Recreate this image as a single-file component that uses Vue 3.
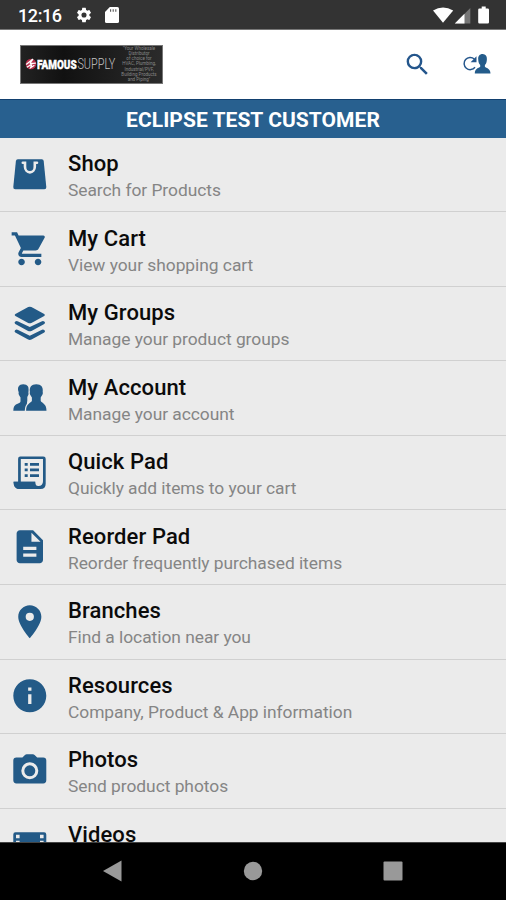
<script setup>
const rows = [
  { icon: 'shop', title: 'Shop', text: 'Search for Products' },
  { icon: 'cart', title: 'My Cart', text: 'View your shopping cart' },
  { icon: 'groups', title: 'My Groups', text: 'Manage your product groups' },
  { icon: 'account', title: 'My Account', text: 'Manage your account' },
  { icon: 'quick', title: 'Quick Pad', text: 'Quickly add items to your cart' },
  { icon: 'reorder', title: 'Reorder Pad', text: 'Reorder frequently purchased items' },
  { icon: 'pin', title: 'Branches', text: 'Find a location near you' },
  { icon: 'info', title: 'Resources', text: 'Company, Product & App information' },
  { icon: 'camera', title: 'Photos', text: 'Send product photos' },
  { icon: 'movie', title: 'Videos', text: '' },
]
const filled = {
  cart: 'M7 18c-1.1 0-1.99.9-1.99 2S5.9 22 7 22s2-.9 2-2-.9-2-2-2zM1 2v2h2l3.6 7.59-1.35 2.45c-.16.28-.25.61-.25.96 0 1.1.9 2 2 2h12v-2H7.42c-.14 0-.25-.11-.25-.25l.03-.12.9-1.63h7.45c.75 0 1.41-.41 1.75-1.03l3.58-6.49A1 1 0 0 0 20.25 4H5.21l-.94-2H1zm16 16c-1.1 0-1.99.9-1.99 2s.89 2 1.99 2 2-.9 2-2-.9-2-2-2z',
  reorder: 'M14 2H6c-1.1 0-1.99.9-1.99 2L4 20c0 1.1.89 2 1.99 2H18c1.1 0 2-.9 2-2V8l-6-6zm2 16H8v-2h8v2zm0-4H8v-2h8v2zm-3-5V3.5L18.5 9H13z',
  pin: 'M12 2C8.13 2 5 5.13 5 9c0 5.25 7 13 7 13s7-7.75 7-13c0-3.87-3.13-7-7-7zm0 9.5a2.5 2.5 0 0 1 0-5 2.5 2.5 0 0 1 0 5z',
  info: 'M12 2C6.48 2 2 6.48 2 12s4.48 10 10 10 10-4.48 10-10S17.52 2 12 2zm1 15h-2v-6h2v6zm0-8h-2V7h2v2z',
}
</script>

<template>
  <div class="screen">
    <header class="status">
      <span class="time">12:16</span>
      <svg class="gear" viewBox="0 0 24 24"><path fill="#fff" d="M19.14 12.94c.04-.3.06-.61.06-.94 0-.32-.02-.64-.07-.94l2.03-1.58a.49.49 0 0 0 .12-.61l-1.92-3.32a.49.49 0 0 0-.59-.22l-2.39.96c-.5-.38-1.03-.7-1.62-.94l-.36-2.54a.48.48 0 0 0-.48-.41h-3.84c-.24 0-.43.17-.47.41l-.36 2.54c-.59.24-1.13.57-1.62.94l-2.39-.96a.48.48 0 0 0-.59.22L2.74 8.87c-.12.21-.08.47.12.61l2.03 1.58c-.05.3-.09.63-.09.94s.02.64.07.94l-2.03 1.58a.49.49 0 0 0-.12.61l1.92 3.32c.12.22.37.29.59.22l2.39-.96c.5.38 1.03.7 1.62.94l.36 2.54c.05.24.24.41.48.41h3.84c.24 0 .44-.17.47-.41l.36-2.54c.59-.24 1.13-.56 1.62-.94l2.39.96c.22.08.47 0 .59-.22l1.92-3.32a.49.49 0 0 0-.12-.61l-2.01-1.58zM12 15.4a3.4 3.4 0 1 1 0-6.8 3.4 3.4 0 0 1 0 6.8z"/></svg>
      <svg class="sd" viewBox="0 0 14 16"><path fill="#fff" d="M4.8 0H12.4Q14 0 14 1.6V14.4Q14 16 12.4 16H1.6Q0 16 0 14.4V5z"/><path stroke="#555" stroke-width="1.1" d="M5.6 2.2v2.6M8.2 2.2v2.6M10.8 2.2v2.6"/></svg>
      <svg class="signals" viewBox="0 0 60 20">
        <path fill="#fff" d="M1 5.5Q11 -.5 21.200 5.500L11 17.700z"/>
        <path fill="#777" d="M38.300 3V18.500H22.800z"/><path fill="#fff" d="M32.500 8.800V18.500H22.800z"/>
        <path fill="#fff" d="M49.700 1.500h4v2h2q1.300 0 1.300 1.300v12.400q0 1.300-1.300 1.300h-8.300q-1.200 0-1.200-1.300V4.800q0-1.300 1.200-1.300h2.300z"/>
      </svg>
    </header>

    <div class="toolbar">
      <div class="logo">
        <svg class="mark" viewBox="0 0 12 12"><circle cx="6" cy="6" r="5.3" fill="#b62c49"/><path d="M1.2 6.6 6.5 2.2 5.4 5.6 10.8 5.2M1.8 9.2 6.8 6.2 5.6 9.8 9.4 7.3M8 1 6.4 3.4" fill="none" stroke="#fff" stroke-width="1.3"/></svg>
        <svg class="brand" viewBox="0 0 80 18"><text class="famous" x="0" y="14" textLength="39.600" lengthAdjust="spacingAndGlyphs">FAMOUS</text><text class="supply" x="40.400" y="14" textLength="38" lengthAdjust="spacingAndGlyphs">SUPPLY</text></svg>
        <div class="motto">"Your Wholesale<br>Distributor<br>of choice for<br>HVAC, Plumbing,<br>Industrial/PVF,<br>Building Products<br>and Piping"</div>
      </div>
      <svg class="search" viewBox="0 0 24 24"><path fill="#24568c" d="M15.5 14h-.79l-.28-.27A6.47 6.47 0 0 0 16 9.5 6.5 6.5 0 1 0 9.5 16c1.61 0 3.09-.59 4.23-1.57l.27.28v.79l5 4.99L20.49 19l-4.99-5zm-6 0C7.01 14 5 11.99 5 9.5S7.01 5 9.5 5 14 7.01 14 9.5 11.99 14 9.5 14z"/></svg>
      <svg class="switch" viewBox="0 0 30 22">
        <path d="M12.300 6A6.100 6.100 0 1 0 13 14.300" fill="none" stroke="#24568c" stroke-width="1.5"/><path d="M14.500 3.200v6H8.600z" fill="#24568c"/>
        <path fill="#245c8b" d="M20.700 1C17.600 1 16 3.200 16.200 6q.1 4.500 2 6v1.800c-1.500 1.300-5.400 1.700-5.400 6.600h15.700c0-4.900-4.400-5.300-5.600-6.600V12q1.900-1.500 2-6c.1-2.800-1.300-5-4.200-5z"/>
      </svg>
    </div>

    <div class="customer"><span>ECLIPSE TEST CUSTOMER</span></div>

    <main class="list">
      <div v-for="row in rows" :key="row.icon" class="row">
        <svg v-if="filled[row.icon]" class="icon" viewBox="0 0 24 24"><path :d="filled[row.icon]"/></svg>
        <svg v-else class="icon" viewBox="0 0 39.6 39.6">
          <template v-if="row.icon === 'shop'">
            <path d="M7.800 4.300h24q1.700 0 1.900 1.700l2.600 26q.2 2.200-2 2.200H5.300q-2.200 0-2-2.200l2.600-26q.2-1.700 1.900-1.700z"/>
            <path class="cut" stroke-width="2.600" stroke-linecap="round" d="M12.800 7.800h2.200v4a4.900 5.600 0 0 0 9.800 0v-4H27"/>
          </template>
          <template v-else-if="row.icon === 'groups'">
            <path d="M18.200 3.100q1.600-.8 3.200 0l12.800 6.900q1.500 1 0 2l-12.800 6.900q-1.600.8-3.200 0L5.400 12q-1.500-1 0-2z"/>
            <path d="M5.300 17.400q1.400-.8 2.800 0l11.700 5.700 11.700-5.700q1.400-.8 2.800 0 1.600 1.300 0 2.600l-12.800 6.900q-1.700.9-3.400 0L5.300 20q-1.600-1.300 0-2.600z"/>
            <path d="M5.300 26q1.400-.8 2.800 0l11.700 5.700L31.500 26q1.400-.8 2.800 0 1.600 1.300 0 2.600l-12.800 6.900q-1.700.9-3.400 0L5.300 28.600q-1.600-1.300 0-2.600z"/>
          </template>
          <template v-else-if="row.icon === 'account'">
            <path d="M13.200 6.300c4.500 0 6.100 3 5.600 7.500.7 2.100-.8 3.600-1.500 5.300v3.500L16 32.800H3.300q-.2-5.700 4.800-7.200c1.800-.7 2.400-1.200 2.400-2.600v-3.400c-.9-1.700-2.500-3.200-1.800-5.300C6.800 9.300 9 6.300 13.200 6.300z"/>
            <path class="person" d="M26.300 6.300c5 0 7.100 3 6.400 7.500.8 2.200-.9 4-2 5.600v3.400c1 2.700 5.800 2.300 5.800 10H16.100c0-7.700 4.800-7.300 5.800-10v-3.400c-1.100-1.600-2.800-3.400-2-5.600-.7-4.500 1.400-7.500 6.400-7.500z"/>
          </template>
          <template v-else-if="row.icon === 'quick'">
            <path fill-rule="evenodd" d="M10.300 3.400h23q2.400 0 2.400 2.400v25q0 5.300-5.200 5.300H9.600Q3.600 36.100 3.600 29.600v-.9h4.500V5.800q0-2.400 2.200-2.400zM10.800 6v22.700h14.400v1q0 3.300 3.100 3.300 4.700 0 4.700-4.800V6z"/>
            <path d="M3.600 28.700H25.200v1q0 3.300 3.300 4.300L26 36.100H9.600Q3.600 36.100 3.600 28.700z"/>
            <path d="M14.700 10h3v2.700h-3zM20 10h9v2.700h-9zM14.700 15.600h3v2.700h-3zM20 15.600h9v2.700h-9zM14.700 21.200h3v2.700h-3zM20 21.200h9v2.700h-9z"/>
          </template>
          <template v-else-if="row.icon === 'camera'">
            <path d="M6.400 6.400h6L15 3.900q.7-.7 1.700-.7h6.200q1 0 1.700.7l2.600 2.500h6q3.100 0 3.100 3.100v19.800q0 3.100-3.100 3.100H6.400q-3.100 0-3.100-3.100V9.500q0-3.100 3.100-3.100z"/>
            <circle class="cut" cx="19.800" cy="19.800" r="7" stroke-width="3"/>
          </template>
          <template v-else>
            <path fill-rule="evenodd" d="M5.500 6.300h28.600q2.200 0 2.200 2.200v22.600q0 2.200-2.200 2.200H5.500q-2.200 0-2.200-2.200V8.500q0-2.200 2.200-2.200zM6 8.700v3.600h3.600V8.700zM30 8.700v3.600h3.600V8.700zM6 14.700v3.600h3.600v-3.600zM30 14.700v3.600h3.600v-3.600z"/>
          </template>
        </svg>
        <div class="copy">
          <div class="title">{{ row.title }}</div>
          <div class="sub">{{ row.text }}</div>
        </div>
      </div>
    </main>

    <nav class="nav">
      <svg viewBox="0 0 20 22"><path fill="#999" d="M18.500.5v21L0 11z"/></svg>
      <svg viewBox="0 0 20 22"><circle cx="10" cy="11" r="9.200" fill="#999"/></svg>
      <svg viewBox="0 0 20 22"><rect x=".5" y="1.500" width="19" height="19" rx="1" fill="#999"/></svg>
    </nav>
  </div>
</template>

<style>
body { margin: 0; }
</style>

<style scoped>
.screen { width: 506px; height: 900px; display: flex; flex-direction: column; overflow: hidden; background: #ebebeb; font-family: Roboto, sans-serif; }
.status { flex: none; height: 30px; box-sizing: border-box; display: flex; align-items: center; padding: 1px 14px 0 18px; background: #333; border-bottom: 1px solid #777; }
.time { width: 57px; color: #fff; font-size: 18px; font-weight: 500; line-height: 28px; letter-spacing: -.4px; padding-top: 2px; }
.gear { width: 18px; height: 18px; }
.sd { width: 14px; height: 16px; margin-left: 12px; }
.signals { width: 60px; height: 20px; margin-left: auto; }
.toolbar { flex: none; height: 69px; box-sizing: border-box; display: flex; align-items: center; padding: 0 14px 1px 20px; background: #fff; }
.logo { width: 143px; height: 39px; box-sizing: border-box; border: 1px solid #777; display: flex; align-items: center; background: linear-gradient(90deg, #222, #111 30%, #2b2b2b); padding-left: 4px; }
.mark { width: 12px; height: 12px; flex: none; }
.brand { width: 80px; height: 18px; flex: none; }
.famous { font: 900 13.5px Roboto, sans-serif; fill: #fff; stroke: #fff; stroke-width: .4px; }
.supply { font: 300 14px Roboto, sans-serif; fill: #c4c4c4; }
.motto { width: 38px; margin-left: 3px; color: #888; font-size: 4.5px; line-height: 5.1px; text-align: center; white-space: nowrap; }
.search { width: 29px; height: 29px; margin-left: auto; }
.switch { width: 30px; height: 22px; margin-left: 30px; }
.customer { flex: none; height: 38.700px; box-sizing: border-box; padding-top: 2px; background: #28608f; border-top: 1px solid #12406f; display: flex; align-items: center; justify-content: center; color: #fff; font-size: 21px; font-weight: 700; letter-spacing: .05px; }
.list { flex: 1; min-height: 0; overflow: hidden; }
.row { height: 74.560px; box-sizing: border-box; border-bottom: 1.500px solid #d0d0d0; display: flex; align-items: center; padding-left: 10.200px; }
.icon { width: 39.600px; height: 39.600px; flex: none; fill: #235a87; }
.cut { fill: none; stroke: #ebebeb; }
.person { stroke: #ebebeb; stroke-width: 2.600px; paint-order: stroke; }
.copy { margin-left: 18.200px; padding-top: 5px; white-space: nowrap; }
.title { color: #0b0b0b; font-size: 22px; font-weight: 500; line-height: 26px; letter-spacing: .1px; }
.sub { min-height: 26px; color: #858585; font-size: 17.400px; font-weight: 400; line-height: 26px; letter-spacing: -.04px; }
.nav { flex: none; height: 58px; box-sizing: border-box; background: #000; border-top: 1px solid #444; display: flex; justify-content: space-between; align-items: center; padding: 0 103px 2px; }
.nav svg { width: 20px; height: 22px; }
</style>
